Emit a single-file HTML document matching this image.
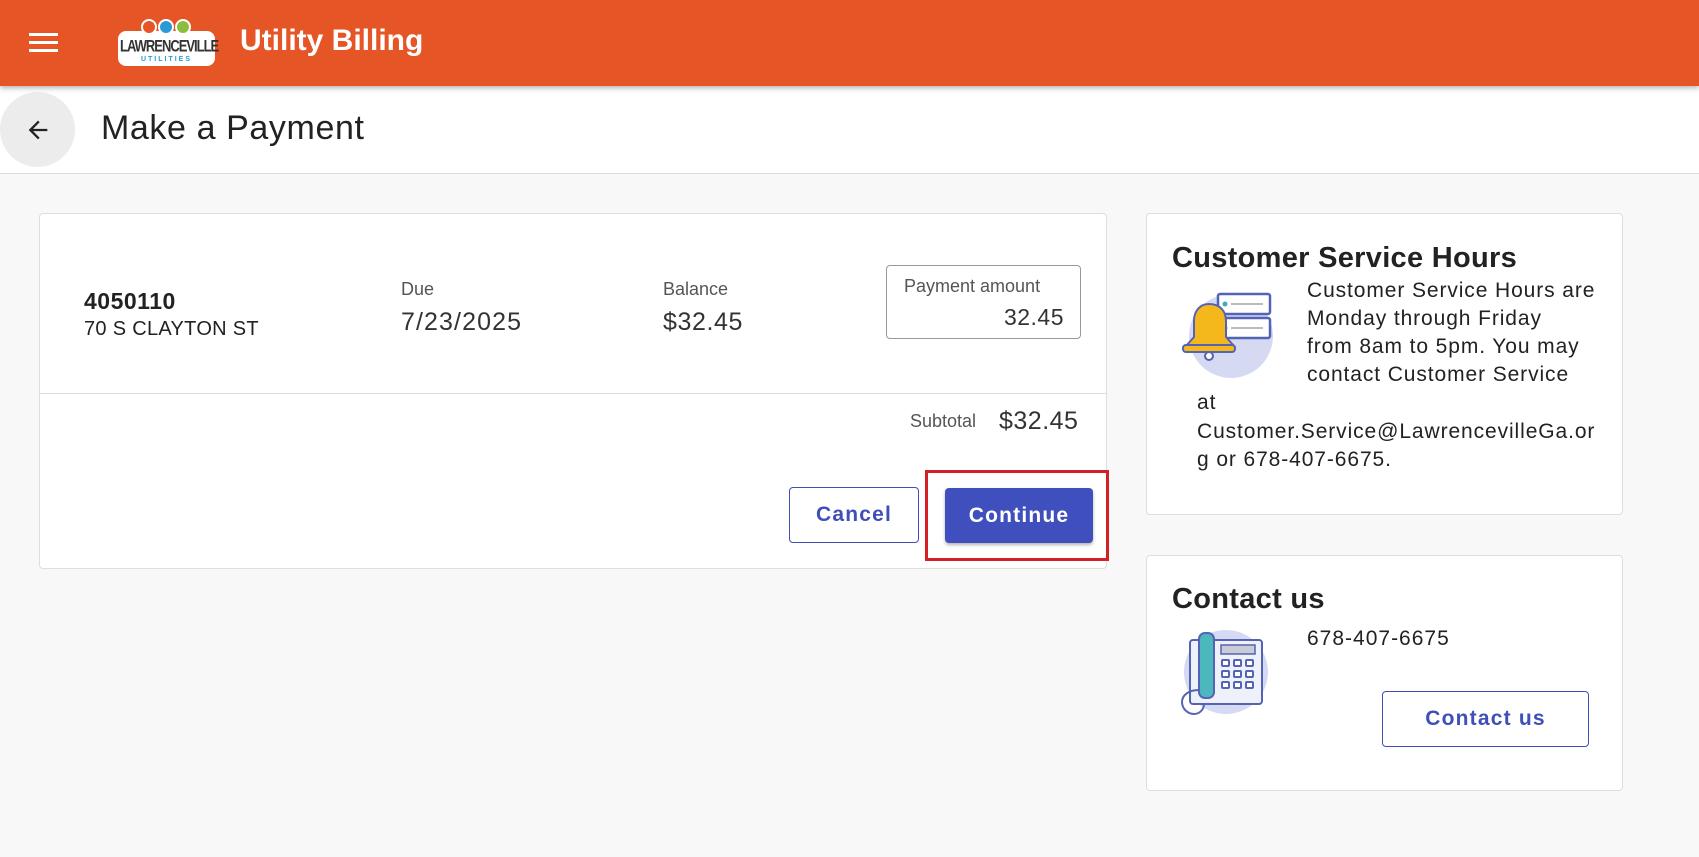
<!DOCTYPE html>
<html><head><style>
*{box-sizing:border-box;margin:0;padding:0}
body{width:1699px;height:857px;overflow:hidden;background:#f8f8f8;font-family:"Liberation Sans",Arial,sans-serif;color:#222;position:relative}
.abs{position:absolute}
.hdr{left:0;top:0;width:1699px;height:86px;background:#e55525;box-shadow:0 2px 5px rgba(0,0,0,.3);z-index:2}
.sub{left:0;top:86px;width:1699px;height:88px;background:#fff;border-bottom:1px solid #ddd}
.card{background:#fff;border:1px solid #dedede;border-radius:4px}
.btn{border-radius:4px;font-weight:bold;font-size:21px;letter-spacing:1.2px;display:flex;align-items:center;justify-content:center}
</style></head><body>
<div class="abs hdr">
  <div class="abs" style="left:29px;top:33px;width:29px;height:3px;background:#fff;box-shadow:0 8px 0 #fff,0 16px 0 #fff"></div>
  <div class="abs" style="left:118px;top:31px;width:97px;height:35px;background:#fff;border-radius:8px"></div>
  <div class="abs" style="left:141px;top:19px;width:16px;height:16px;border-radius:50%;background:#e55525;border:2px solid #fff"></div>
  <div class="abs" style="left:158px;top:19px;width:16px;height:16px;border-radius:50%;background:#2a9ad6;border:2px solid #fff"></div>
  <div class="abs" style="left:175px;top:19px;width:16px;height:16px;border-radius:50%;background:#8cbd3f;border:2px solid #fff"></div>
  <div class="abs" style="left:120px;top:38px;width:93px;text-align:center;font-size:13px;font-weight:bold;color:#333;letter-spacing:-1px;transform:scaleY(1.3)">LAWRENCEVILLE</div>
  <div class="abs" style="left:120px;top:56px;width:93px;text-align:center;font-size:7px;font-weight:bold;color:#2a9ad6;letter-spacing:2px">UTILITIES</div>
  <div class="abs" style="left:240px;top:24px;font-size:30px;font-weight:bold;color:#fff">Utility Billing</div>
</div>
<div class="abs sub">
  <div class="abs" style="left:0;top:6px;width:75px;height:75px;border-radius:50%;background:#ececec"></div>
  <svg class="abs" style="left:24px;top:30px" width="28" height="28" viewBox="0 0 24 24"><path d="M20 11H7.8l5.6-5.6L12 4l-8 8 8 8 1.4-1.4L7.8 13H20z" fill="#222"/></svg>
  <div class="abs" style="left:101px;top:23px;font-size:34px;letter-spacing:.6px;color:#222">Make a Payment</div>
</div>
<div class="abs card" style="left:39px;top:213px;width:1068px;height:356px">
  <div class="abs" style="left:44px;top:74px;font-size:23px;font-weight:bold;letter-spacing:.5px">4050110</div>
  <div class="abs" style="left:44px;top:104px;font-size:20px;letter-spacing:.3px">70 S CLAYTON ST</div>
  <div class="abs" style="left:361px;top:65px;font-size:18px;color:#555">Due</div>
  <div class="abs" style="left:361px;top:94px;font-size:25px;letter-spacing:1.1px;color:#333">7/23/2025</div>
  <div class="abs" style="left:623px;top:65px;font-size:18px;color:#555">Balance</div>
  <div class="abs" style="left:623px;top:94px;font-size:25px;letter-spacing:.6px;color:#333">$32.45</div>
  <div class="abs" style="left:846px;top:51px;width:195px;height:74px;border:1px solid #999;border-radius:4px">
    <div class="abs" style="left:17px;top:10px;font-size:18px;color:#555">Payment amount</div>
    <div class="abs" style="right:16px;top:38px;font-size:23px;letter-spacing:.5px;color:#333">32.45</div>
  </div>
  <div class="abs" style="left:0;top:179px;width:1066px;height:1px;background:#ddd"></div>
  <div class="abs" style="left:870px;top:197px;font-size:18px;color:#555">Subtotal</div>
  <div class="abs" style="left:959px;top:193px;font-size:25px;letter-spacing:.5px;color:#333">$32.45</div>
  <div class="abs btn" style="left:749px;top:273px;width:130px;height:56px;border:1.5px solid #3f4fb8;color:#3f4fb8">Cancel</div>
  <div class="abs" style="left:885px;top:256px;width:184px;height:91px;border:3px solid #d41f26"></div>
  <div class="abs btn" style="left:905px;top:274px;width:148px;height:55px;background:#3f4fbd;color:#fff;box-shadow:0 2px 3px rgba(0,0,0,.3)">Continue</div>
</div>
<div class="abs card" style="left:1146px;top:213px;width:477px;height:302px">
  <div class="abs" style="left:25px;top:28px;font-size:29px;font-weight:bold;color:#222;letter-spacing:.3px">Customer Service Hours</div>
  <svg class="abs" style="left:34px;top:74px" width="96" height="92" viewBox="0 0 96 92">
    <circle cx="50" cy="48" r="42" fill="#d5daf2"/>
    <rect x="37" y="6" width="52" height="20" rx="2" fill="#fff" stroke="#5563b5" stroke-width="2.5"/>
    <rect x="37" y="30" width="52" height="20" rx="2" fill="#fff" stroke="#5563b5" stroke-width="2.5"/>
    <circle cx="44" cy="16" r="2.5" fill="#3db0b6"/><circle cx="44" cy="40" r="2.5" fill="#3db0b6"/>
    <path d="M50 16h32M50 40h32" stroke="#bbb" stroke-width="2"/>
    <path d="M28 16c-10 0-15 8-15 17v16l-8 9h48l-8-9V33c0-9-5-17-17-17z" fill="#f5b81c" stroke="#5563b5" stroke-width="2"/>
    <rect x="2" y="57" width="52" height="7" rx="3" fill="#f5b81c" stroke="#5563b5" stroke-width="2"/>
    <circle cx="28" cy="68" r="4" fill="#fff" stroke="#5563b5" stroke-width="2"/>
  </svg>
  <div class="abs" style="left:160px;top:63px;width:320px;font-size:21px;letter-spacing:.9px;line-height:28px;color:#222;white-space:nowrap">Customer Service Hours are<br>Monday through Friday<br>from 8am to 5pm. You may<br>contact Customer Service</div>
  <div class="abs" style="left:50px;top:175px;width:410px;font-size:21px;letter-spacing:.9px;line-height:28.5px;color:#222;white-space:nowrap">at<br>Customer.Service@LawrencevilleGa.or<br>g or 678-407-6675.</div>
</div>
<div class="abs card" style="left:1146px;top:555px;width:477px;height:236px">
  <div class="abs" style="left:25px;top:27px;font-size:29px;font-weight:bold;letter-spacing:.3px;color:#222">Contact us</div>
  <svg class="abs" style="left:27px;top:72px" width="96" height="90" viewBox="0 0 96 90">
    <circle cx="52" cy="44" r="42" fill="#d5daf2"/>
    <rect x="16" y="12" width="72" height="64" rx="3" fill="#eef0fa" stroke="#5563b5" stroke-width="2"/>
    <rect x="25" y="5" width="15" height="65" rx="6" fill="#4cb8bd" stroke="#5563b5" stroke-width="2"/>
    <path d="M25 62c-10 0-17 5-17 12s6 12 12 12 10-5 10-10" fill="none" stroke="#5563b5" stroke-width="2"/>
    <rect x="47" y="17" width="34" height="9" fill="#c9cbd6" stroke="#5563b5" stroke-width="1.5"/>
    <g fill="#fff" stroke="#5563b5" stroke-width="2">
      <rect x="48" y="32" width="7" height="6" rx="1"/><rect x="60" y="32" width="7" height="6" rx="1"/><rect x="72" y="32" width="7" height="6" rx="1"/>
      <rect x="48" y="43" width="7" height="6" rx="1"/><rect x="60" y="43" width="7" height="6" rx="1"/><rect x="72" y="43" width="7" height="6" rx="1"/>
      <rect x="48" y="54" width="7" height="6" rx="1"/><rect x="60" y="54" width="7" height="6" rx="1"/><rect x="72" y="54" width="7" height="6" rx="1"/>
    </g>
  </svg>
  <div class="abs" style="left:160px;top:71px;font-size:21px;letter-spacing:1px;color:#222">678-407-6675</div>
  <div class="abs btn" style="left:235px;top:135px;width:207px;height:56px;border:1.5px solid #3f4fb8;color:#3f4fb8">Contact us</div>
</div>
</body></html>
